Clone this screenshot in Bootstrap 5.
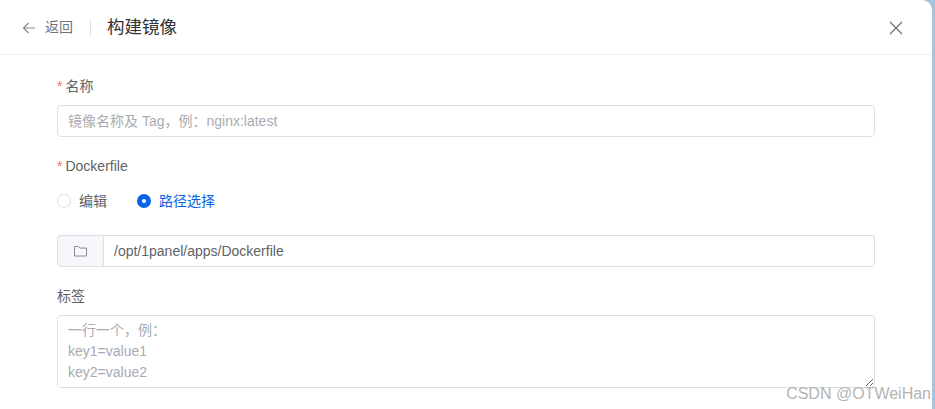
<!DOCTYPE html>
<html lang="zh-CN">
<head>
    <meta charset="UTF-8" />
    <meta name="viewport" content="width=device-width, initial-scale=1" />
    <title>构建镜像</title>
    <link href="https://cdn.jsdelivr.net/npm/bootstrap@5.3.0/dist/css/bootstrap.min.css" rel="stylesheet" />
    <style>
        html, body {
            height: 100%;
            overflow: hidden;
        }
        body {
            font-family: "Liberation Sans", "Noto Sans CJK SC", sans-serif;
            font-size: 14px;
            background: #a3c4da;
            color: #606266;
        }
        .drawer {
            width: 932px;
            height: 409px;
            background: #fff;
            border-top-right-radius: 10px;
            position: relative;
        }
        .drawer-head {
            height: 55px;
            padding: 1px 29px 0 21px;
            border-bottom: 1px solid #ebeef5;
        }
        .back-text {
            color: #707279;
            font-size: 14px;
            margin-left: 8px;
        }
        .head-sep {
            width: 1px;
            height: 16px;
            background: #dcdfe6;
            margin: 0 16px 0 17px;
        }
        .head-title {
            font-size: 17.5px;
            color: #303133;
            margin-top: -1px;
        }
        .drawer-body {
            padding: 21px 0 0 57px;
            width: 875px;
        }
        .field-label {
            height: 20px;
            line-height: 20px;
            margin-bottom: 9px;
            color: #606266;
        }
        .req {
            color: #f56c6c;
            margin-right: 3px;
        }
        .name-input, .path-group .path-input, .tags-input {
            border: 1px solid #dcdfe6;
            border-radius: 4px;
            font-size: 14px;
            color: #606266;
            box-shadow: none;
        }
        .name-input {
            height: 32px;
            padding: 0 10px;
            margin-bottom: 19px;
        }
        .name-input::placeholder, .tags-input::placeholder {
            color: #a8abb2;
            opacity: 1;
        }
        .radio-row {
            height: 32px;
            gap: 30px;
            margin-bottom: 18px;
        }
        .radio-dot {
            width: 14px;
            height: 14px;
            border: 1px solid #dcdfe6;
            border-radius: 50%;
            background: #fff;
            margin-right: 8px;
        }
        .radio-dot.on {
            border: 5px solid #0a63e8;
        }
        .radio-on-text {
            color: #0a63e8;
        }
        .path-group {
            height: 32px;
            margin-bottom: 19px;
        }
        .path-addon {
            width: 47px;
            background: #f5f7fa;
            border: 1px solid #dcdfe6;
            border-radius: 4px 0 0 4px;
        }
        .path-group .path-input {
            height: 32px;
            padding: 0 10px;
            border-left: 0;
            border-radius: 0 4px 4px 0;
        }
        .tags-input {
            height: 73px;
            padding: 4px 10px;
            line-height: 21px;
        }
        .watermark {
            position: absolute;
            right: 1px;
            bottom: 5px;
            font-size: 16px;
            line-height: 20px;
            color: #b4b4b4;
        }
    </style>
</head>
<body>
<div class="drawer">
    <div class="drawer-head d-flex align-items-center">
        <svg width="16" height="16" viewBox="0 0 16 16" fill="none" stroke="#8a8c92" stroke-width="1.2">
            <path d="M14 8H2.5M7.5 3 2.5 8l5 5" />
        </svg>
        <span class="back-text">返回</span>
        <span class="head-sep"></span>
        <span class="head-title">构建镜像</span>
        <svg class="ms-auto" width="14" height="14" viewBox="0 0 14 14" fill="none" stroke="#6d6f75" stroke-width="1.2">
            <path d="M1 1 13 13M13 1 1 13" />
        </svg>
    </div>
    <div class="drawer-body">
        <div class="field-label"><span class="req">*</span>名称</div>
        <input class="form-control name-input" type="text" placeholder="镜像名称及 Tag，例：nginx:latest" />

        <div class="field-label"><span class="req">*</span>Dockerfile</div>
        <div class="radio-row d-flex align-items-center">
            <div class="d-flex align-items-center">
                <span class="radio-dot"></span><span>编辑</span>
            </div>
            <div class="d-flex align-items-center">
                <span class="radio-dot on"></span><span class="radio-on-text">路径选择</span>
            </div>
        </div>
        <div class="path-group d-flex">
            <div class="path-addon d-flex flex-shrink-0 align-items-center justify-content-center">
                <svg width="14" height="14" viewBox="0 0 14 14" fill="none" stroke="#8a8c92" stroke-width="1">
                    <path d="M0.5 2.5h4.2l1.3 1.6h6.5v7.9H0.5z" />
                </svg>
            </div>
            <input class="form-control path-input" type="text" value="/opt/1panel/apps/Dockerfile" />
        </div>

        <div class="field-label">标签</div>
        <textarea class="form-control tags-input" placeholder="一行一个，例：&#10;key1=value1&#10;key2=value2"></textarea>
    </div>
    <div class="watermark">CSDN @OTWeiHan</div>
</div>
<script src="https://cdn.jsdelivr.net/npm/bootstrap@5.3.0/dist/js/bootstrap.bundle.min.js"></script>
</body>
</html>
